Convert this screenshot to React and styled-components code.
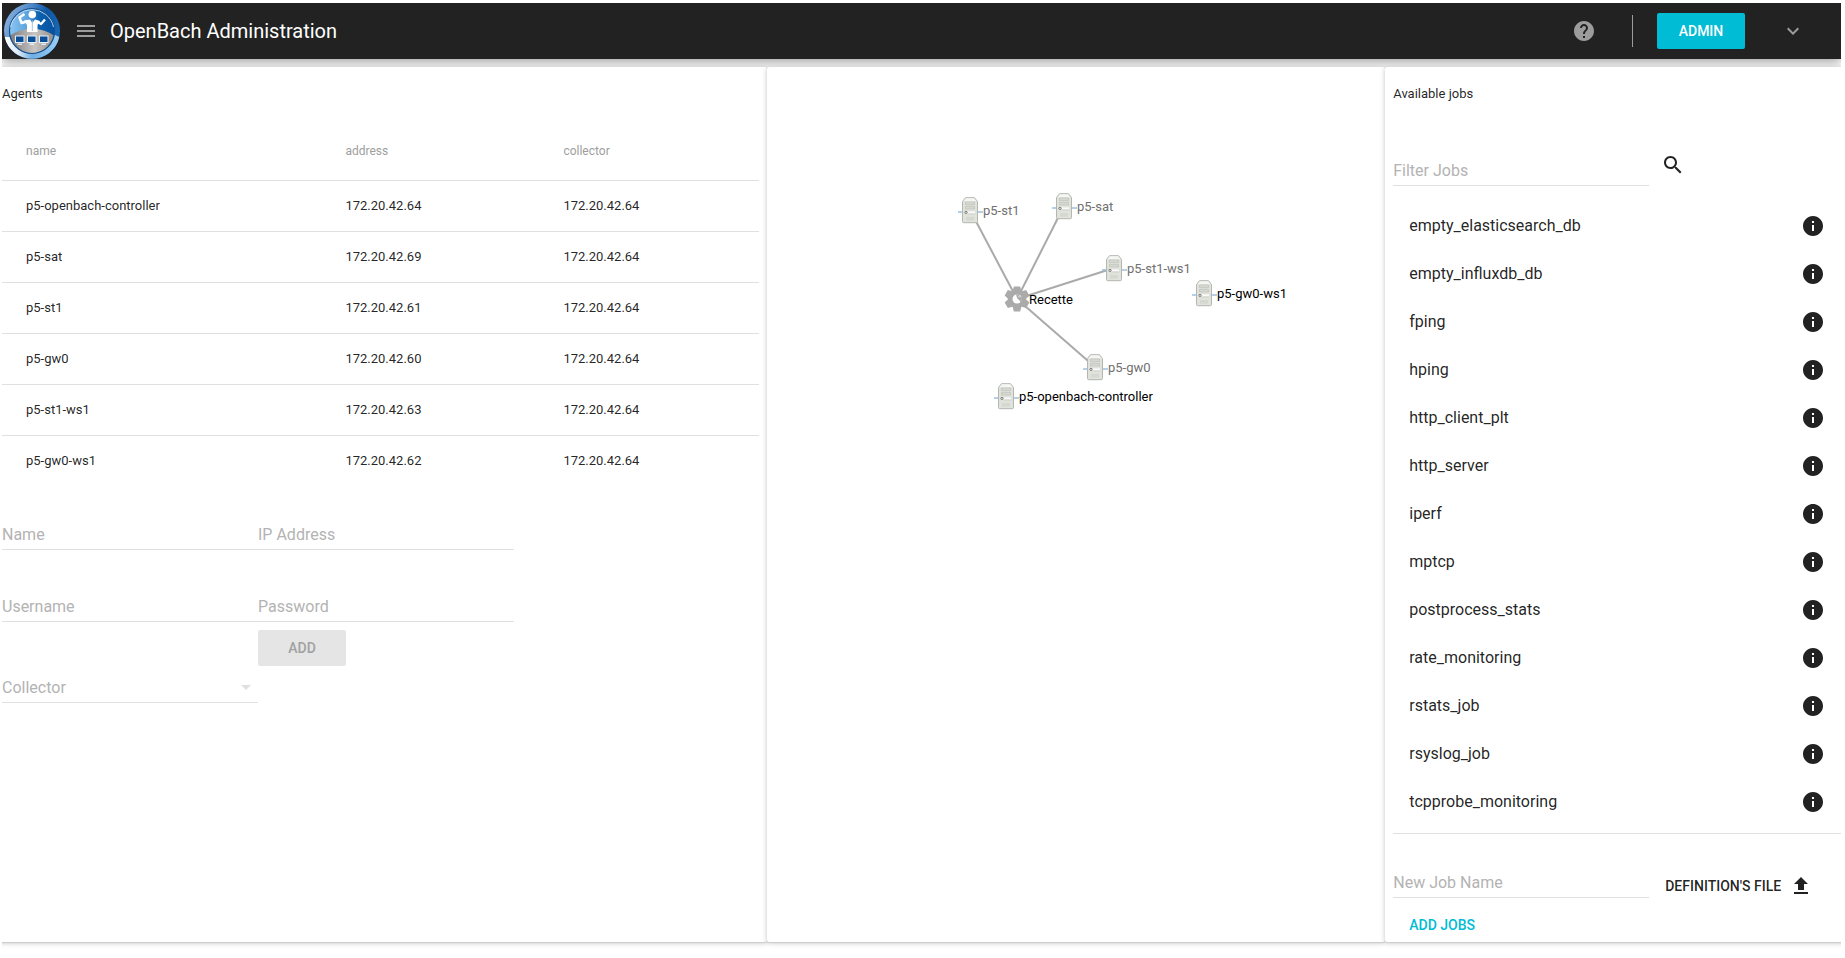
import React from "react";
import styled, { createGlobalStyle } from "styled-components";

const GlobalStyle = createGlobalStyle`
  * { box-sizing: border-box; }
  html { overflow-x: hidden; background: #fff; }
  body {
    margin: 3px 4px 0 2px;
    padding-bottom: 8px;
    font-family: Roboto, "Liberation Sans", sans-serif;
    font-size: 13px;
    color: rgba(0, 0, 0, 0.87);
  }
  button, input, select { font-family: inherit; }
`;

const AppBar = styled.header`
  display: flex;
  align-items: center;
  height: 56px;
  padding: 0 0 0 2px;
  background: #222;
  box-shadow: 0 3px 10px rgba(0, 0, 0, 0.16), 0 3px 10px rgba(0, 0, 0, 0.23);
`;

const LogoLink = styled.a`
  display: block;
  height: 56px;
  margin-right: 14px;
`;

const BarIconButton = styled.button`
  display: flex;
  align-items: center;
  justify-content: center;
  width: ${(p) => (p.$compact ? 24 : 48)}px;
  height: 48px;
  padding: 0;
  border: 0;
  background: none;
  color: #9c9c9c;
  cursor: pointer;
`;

const Title = styled.h1`
  flex: 1;
  margin: 0 0 0 12px;
  font-size: 20px;
  font-weight: 400;
  line-height: 56px;
  color: #fff;
`;

const Separator = styled.span`
  width: 1px;
  height: 32px;
  margin: 0 24px;
  background: #9c9c9c;
`;

const RaisedButton = styled.button`
  min-width: 88px;
  height: 36px;
  padding: 0 16px;
  border: 0;
  border-radius: 2px;
  font-size: 14px;
  font-weight: 500;
  text-transform: uppercase;
  background: ${(p) => (p.disabled ? "#e5e5e5" : "#00bcd4")};
  color: ${(p) => (p.disabled ? "#a1a1a1" : "#fff")};
`;

const BarActions = styled.div`
  display: flex;
  align-items: center;
  padding-right: 24px;
`;

const UserButton = styled(RaisedButton)`
  margin-right: 24px;
`;

const Columns = styled.main`
  display: grid;
  grid-template-columns: 5fr 4fr 3fr;
  margin: 8px -8px 0;
`;

const Panel = styled.section`
  position: relative;
  min-width: 0;
  padding: 8px 8px 0;
  border-radius: 2px;
  background: #fff;
  box-shadow: 0 1px 6px rgba(0, 0, 0, 0.12), 0 1px 4px rgba(0, 0, 0, 0.12),
    0 1px 1px rgba(0, 0, 0, 0.08);
`;

const PanelTitle = styled.h2`
  height: 47px;
  margin: 0;
  font-size: 13px;
  font-weight: 400;
  line-height: 38px;
`;

const Table = styled.table`
  width: 100%;
  border-collapse: separate;
  border-spacing: 0;
  table-layout: fixed;
`;

const HeadCell = styled.th`
  width: ${(p) => p.$width};
  height: 59px;
  padding: 0 24px;
  border-bottom: 1px solid #e0e0e0;
  font-size: 12px;
  font-weight: 400;
  text-align: left;
  color: #9e9e9e;
`;

const Cell = styled.td`
  height: 51px;
  padding: 0 24px 2px;
  border-bottom: 1px solid #e0e0e0;
  tr:last-child > & {
    height: 50px;
    border-bottom: 0;
  }
`;

const AgentForm = styled.form`
  display: grid;
  grid-template-columns: repeat(2, minmax(0, 256px));
  align-items: start;
`;

const FieldBox = styled.div`
  position: relative;
  display: flex;
  flex-direction: column;
  justify-content: flex-end;
  width: ${(p) => p.$width || "auto"};
  height: ${(p) => (p.$tall ? 81 : 72)}px;
  padding-bottom: 8px;
`;

const Input = styled.input`
  width: 100%;
  height: 28px;
  padding: 0 0 3px;
  border: 0;
  border-bottom: 1px solid #e0e0e0;
  border-radius: 0;
  outline: 0;
  background: none;
  font-size: 16px;
  color: rgba(0, 0, 0, 0.87);
  &::placeholder {
    color: #b3b3b3;
    opacity: 1;
  }
`;

const Select = styled(Input)`
  appearance: none;
  color: #b3b3b3;
`;

const SelectArrow = styled.svg`
  position: absolute;
  right: 0;
  bottom: 12px;
  pointer-events: none;
`;

const FormRow = styled.div`
  display: flex;
  align-items: flex-end;
`;

const IconButton = styled.button`
  display: flex;
  align-items: center;
  justify-content: center;
  width: 48px;
  height: 48px;
  padding: 0;
  border: 0;
  background: none;
  color: #222;
  cursor: pointer;
`;

const SearchButton = styled(IconButton)`
  margin-bottom: 5px;
`;

const JobList = styled.ul`
  margin: 0;
  padding: 8px 0 7px;
  border-bottom: 1px solid #e0e0e0;
  list-style: none;
`;

const JobItem = styled.li`
  display: flex;
  align-items: center;
  justify-content: space-between;
  height: 48px;
  padding: 0 4px 0 16px;
  font-size: 16px;
  line-height: 19px;
`;

const JobName = styled.span`
  padding-bottom: 1px;
`;

const FlatButton = styled.button`
  display: flex;
  align-items: center;
  gap: 8px;
  height: 36px;
  padding: 0 16px;
  border: 0;
  background: none;
  font-size: 14px;
  font-weight: 500;
  text-transform: uppercase;
  white-space: nowrap;
  color: ${(p) => (p.$primary ? "#00bcd4" : "rgba(0, 0, 0, 0.87)")};
  cursor: pointer;
`;

const FileButton = styled(FlatButton)`
  margin-bottom: 2px;
`;

const AddJobsButton = styled(FlatButton)`
  padding-top: 2px;
`;

const Graph = styled.svg`
  display: block;
  width: 100%;
  height: 400px;
`;

const NodeLabel = styled.text`
  font-size: 13px;
  fill: ${(p) => (p.$muted ? "#707070" : "#000")};
`;

const ICONS = {
  menu: "M3 18h18v-2H3v2zm0-5h18v-2H3v2zm0-7v2h18V6H3z",
  help: "M12 2C6.48 2 2 6.48 2 12s4.48 10 10 10 10-4.48 10-10S17.52 2 12 2zm1 17h-2v-2h2v2zm2.07-7.75l-.9.92C13.45 12.9 13 13.5 13 15h-2v-.5c0-1.1.45-2.1 1.17-2.83l1.24-1.26c.37-.36.59-.86.59-1.41 0-1.1-.9-2-2-2s-2 .9-2 2H8c0-2.21 1.79-4 4-4s4 1.79 4 4c0 .88-.36 1.68-.93 2.25z",
  expand: "M16.59 8.59L12 13.17 7.41 8.59 6 10l6 6 6-6z",
  search: "M15.5 14h-.79l-.28-.27C15.41 12.59 16 11.11 16 9.5 16 5.91 13.09 3 9.5 3S3 5.91 3 9.5 5.91 16 9.5 16c1.61 0 3.09-.59 4.23-1.57l.27.28v.79l5 4.99L20.49 19l-4.99-5zm-6 0C7.01 14 5 11.99 5 9.5S7.01 5 9.5 5 14 7.01 14 9.5 11.99 14 9.5 14z",
  info: "M12 2C6.48 2 2 6.48 2 12s4.48 10 10 10 10-4.48 10-10S17.52 2 12 2zm1 15h-2v-6h2v6zm0-8h-2V7h2v2z",
  upload: "M9 16h6v-6h4l-7-7-7 7h4zm-4 2h14v2H5z",
};

function Icon({ name }) {
  return (
    <svg width="24" height="24" viewBox="0 0 24 24" fill="currentColor" aria-hidden="true">
      <path d={ICONS[name]} />
    </svg>
  );
}

function Logo() {
  return (
    <svg width="56" height="56" viewBox="0 0 56 56" aria-hidden="true">
      <defs>
        <linearGradient id="ringTop" x1="0" x2="1" y1="0" y2="0.4">
          <stop offset="0" stopColor="#9bbde6" />
          <stop offset="0.45" stopColor="#4c86c6" />
          <stop offset="0.7" stopColor="#0d57a5" />
          <stop offset="1" stopColor="#1668b4" />
        </linearGradient>
        <linearGradient id="ringBottom" x1="0" x2="1">
          <stop offset="0" stopColor="#fff" />
          <stop offset="0.25" stopColor="#dce9f8" />
          <stop offset="0.5" stopColor="#6faee2" />
          <stop offset="1" stopColor="#9ad0f5" />
        </linearGradient>
        <linearGradient id="sky" x1="0" x2="1">
          <stop offset="0" stopColor="#8cc6f0" />
          <stop offset="0.4" stopColor="#5ba3de" />
          <stop offset="0.65" stopColor="#0c61b0" />
          <stop offset="1" stopColor="#0750a0" />
        </linearGradient>
        <linearGradient id="ground" x1="0" x2="1">
          <stop offset="0" stopColor="#777" />
          <stop offset="0.55" stopColor="#c8c5c3" />
          <stop offset="1" stopColor="#8a8785" />
        </linearGradient>
        <clipPath id="disc">
          <circle cx="28" cy="28" r="22.5" />
        </clipPath>
      </defs>
      <circle cx="28" cy="28" r="28" fill="url(#ringTop)" />
      <path d="M0.7 34A28 28 0 0 0 55.3 34L50 31.5A22.5 22.5 0 0 1 6 34Z" fill="url(#ringBottom)" />
      <circle cx="28" cy="28" r="22.5" fill="url(#sky)" />
      <g clipPath="url(#disc)">
        <path d="M4 34Q14 26 28 25.5Q42 26 52 34V56H4Z" fill="url(#ground)" />
      </g>
      <circle cx="28" cy="28" r="22.5" fill="none" stroke="#174f8c" strokeWidth="1.2" />
      <path d="M6.5 24A22 22 0 0 1 49.5 24" fill="none" stroke="#d3e8fa" strokeWidth="0.8" />
      <circle cx="28.3" cy="11.6" r="3.8" fill="#fff" />
      <path d="M20.5 11L15.5 14.5L17.5 20L23 18.5M33 18.5L37 21L41 16.5" fill="none" stroke="#fff" strokeWidth="2.4" strokeLinejoin="round" />
      <path d="M20 17.5L26 16.5L28.3 20L31 16.5L36 18L33.5 22V29H23V22Z" fill="#fff" />
      <path d="M28.3 17.5V28" stroke="#a8c4df" strokeWidth="1" />
      {[11.5, 23.5, 35.5].map((x) => (
        <g key={x}>
          <rect x={x} y="33" width="8.5" height="6.5" fill="#0b4f99" stroke="#e5f0fa" strokeWidth="1" />
          <path d={`M${x + 2} 41.2H${x + 6.5}`} stroke="#f4f8fc" strokeWidth="1.2" />
        </g>
      ))}
    </svg>
  );
}

function Server() {
  return (
    <g>
      <path d="M-12 2H13" stroke="#9dbfe2" strokeWidth="1.5" />
      <path d="M-7.5 -8.5L-4.5 -12.3H4.5L7.5 -8.5V11.5Q7.5 12.7 6.3 12.7H-6.3Q-7.5 12.7 -7.5 11.5Z" fill="#e0e2dc" stroke="#b4b6b0" strokeWidth="1" strokeLinejoin="round" />
      <path d="M-6.5 -8.8L-4 -11.8H4L6.5 -8.8Z" fill="#f5f6f3" />
      <path d="M-4.5 -8H4.5V-5.4H-4.5ZM-4.5 -3.6H4.5V-1H-4.5Z" fill="#d6d9d1" stroke="#bec1b9" strokeWidth="0.7" />
      <path d="M-2.5 2.4H5" stroke="#fafafa" strokeWidth="2" />
      <path d="M-2.5 4H5" stroke="#c6c9c2" strokeWidth="0.7" />
      <circle cx="-4" cy="2.4" r="1.1" fill="#fff" stroke="#666" strokeWidth="0.9" />
      <path d="M-3 7V10.5M-1 7V10.5M1 7V10.5M3 7V10.5" stroke="#cdd0c9" strokeWidth="1.2" />
    </g>
  );
}

function Gear() {
  return (
    <g>
      <circle r="9" fill="#aaa" />
      {[0, 60, 120, 180, 240, 300].map((a) => (
        <path key={a} d="M-4.5 -7L-3.2 -12.4H3.2L4.5 -7Z" fill="#aaa" transform={`rotate(${a})`} />
      ))}
      <circle r="4.5" fill="#fff" />
      <path d="M-1 -5L0 -1L4 3L5 -1L2 -4Z" fill="#aaa" />
      <path d="M1.2 -3.2L2.7 -1.5M2.6 -4L4 -2.3" stroke="#eee" strokeWidth="0.9" />
    </g>
  );
}

const HUB = { x: 242, y: 224 };

const NODES = [
  { name: "p5-st1", x: 195, y: 135, linked: true },
  { name: "p5-sat", x: 289, y: 131, linked: true },
  { name: "p5-st1-ws1", x: 339, y: 193, linked: true },
  { name: "p5-gw0-ws1", x: 429, y: 218 },
  { name: "p5-gw0", x: 320, y: 292, linked: true },
  { name: "p5-openbach-controller", x: 231, y: 321 },
];

const AGENTS = [
  ["p5-openbach-controller", "172.20.42.64"],
  ["p5-sat", "172.20.42.69"],
  ["p5-st1", "172.20.42.61"],
  ["p5-gw0", "172.20.42.60"],
  ["p5-st1-ws1", "172.20.42.63"],
  ["p5-gw0-ws1", "172.20.42.62"],
];

const COLLECTOR = "172.20.42.64";

const JOBS = [
  "empty_elasticsearch_db",
  "empty_influxdb_db",
  "fping",
  "hping",
  "http_client_plt",
  "http_server",
  "iperf",
  "mptcp",
  "postprocess_stats",
  "rate_monitoring",
  "rstats_job",
  "rsyslog_job",
  "tcpprobe_monitoring",
];

function TextField({ label, type = "text", width }) {
  return (
    <FieldBox $width={width}>
      <Input type={type} placeholder={label} aria-label={label} />
    </FieldBox>
  );
}

function AgentsPanel() {
  return (
    <Panel>
      <PanelTitle>Agents</PanelTitle>
      <Table>
        <thead>
          <tr>
            <HeadCell $width="42.2%">name</HeadCell>
            <HeadCell $width="28.8%">address</HeadCell>
            <HeadCell>collector</HeadCell>
          </tr>
        </thead>
        <tbody>
          {AGENTS.map(([name, address]) => (
            <tr key={name}>
              <Cell>{name}</Cell>
              <Cell>{address}</Cell>
              <Cell>{COLLECTOR}</Cell>
            </tr>
          ))}
        </tbody>
      </Table>
      <AgentForm>
        <TextField label="Name" />
        <TextField label="IP Address" />
        <TextField label="Username" />
        <TextField label="Password" type="password" />
        <FieldBox $tall>
          <Select as="select" aria-label="Collector" defaultValue="">
            <option value="">Collector</option>
            <option>{COLLECTOR}</option>
          </Select>
          <SelectArrow width="24" height="24" viewBox="0 0 24 24" fill="#e0e0e0" aria-hidden="true">
            <path d="M7 10l5 5 5-5z" />
          </SelectArrow>
        </FieldBox>
        <div>
          <RaisedButton type="button" disabled>Add</RaisedButton>
        </div>
      </AgentForm>
    </Panel>
  );
}

function TopologyPanel() {
  return (
    <Panel>
      <Graph role="img" aria-label="Project topology">
        {NODES.filter((n) => n.linked).map((n) => (
          <line key={n.name} x1={HUB.x} y1={HUB.y} x2={n.x} y2={n.y} stroke="#aaa" strokeWidth="2" />
        ))}
        {NODES.map((n) => (
          <g key={n.name} transform={`translate(${n.x} ${n.y})`}>
            <Server />
            <NodeLabel x="13" y="5" $muted={n.linked}>{n.name}</NodeLabel>
          </g>
        ))}
        <g transform={`translate(${HUB.x} ${HUB.y})`}>
          <Gear />
          <NodeLabel x="12" y="5">Recette</NodeLabel>
        </g>
      </Graph>
    </Panel>
  );
}

function JobsPanel() {
  return (
    <Panel>
      <PanelTitle>Available jobs</PanelTitle>
      <FormRow>
        <TextField label="Filter Jobs" width="256px" />
        <SearchButton type="button" aria-label="Search">
          <Icon name="search" />
        </SearchButton>
      </FormRow>
      <JobList>
        {JOBS.map((job) => (
          <JobItem key={job}>
            <JobName>{job}</JobName>
            <IconButton type="button" aria-label={`About ${job}`}>
              <Icon name="info" />
            </IconButton>
          </JobItem>
        ))}
      </JobList>
      <FormRow>
        <TextField label="New Job Name" width="256px" />
        <FileButton type="button">
          Definition's file
          <Icon name="upload" />
        </FileButton>
      </FormRow>
      <AddJobsButton type="button" $primary>Add jobs</AddJobsButton>
    </Panel>
  );
}

export default function App() {
  return (
    <>
      <GlobalStyle />
      <AppBar>
        <LogoLink href="#" aria-label="OpenBach home">
          <Logo />
        </LogoLink>
        <BarIconButton type="button" $compact aria-label="Menu">
          <Icon name="menu" />
        </BarIconButton>
        <Title>OpenBach Administration</Title>
        <BarActions>
          <BarIconButton type="button" aria-label="Help">
            <Icon name="help" />
          </BarIconButton>
          <Separator />
          <UserButton type="button">Admin</UserButton>
          <BarIconButton type="button" aria-label="Account options">
            <Icon name="expand" />
          </BarIconButton>
        </BarActions>
      </AppBar>
      <Columns>
        <AgentsPanel />
        <TopologyPanel />
        <JobsPanel />
      </Columns>
    </>
  );
}
